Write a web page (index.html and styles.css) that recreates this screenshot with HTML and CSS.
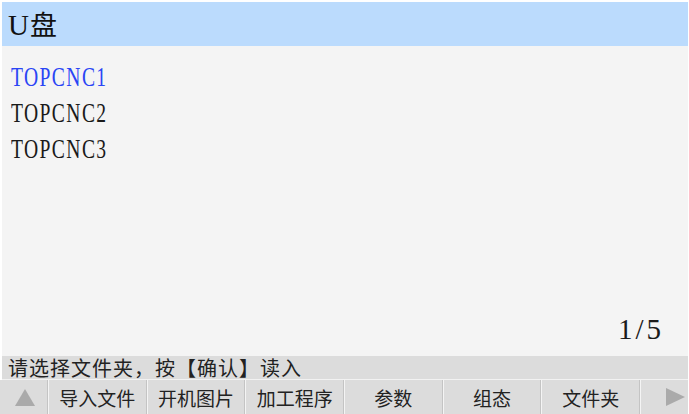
FILE: index.html
```html
<!DOCTYPE html>
<html lang="zh">
<head>
<meta charset="utf-8">
<title>U盘</title>
<link rel="stylesheet" href="styles.css">
</head>
<body>
<div class="screen">
  <header class="title">U<span class="cjk">盘</span></header>
  <main class="list">
    <div class="item active"><span class="narrow">TOPCNC1</span></div>
    <div class="item"><span class="narrow">TOPCNC2</span></div>
    <div class="item"><span class="narrow">TOPCNC3</span></div>
    <div class="pager">1/5</div>
  </main>
  <div class="status">请选择文件夹，按【确认】读入</div>
  <nav class="keys">
    <div class="key arrow"><span class="tri-up"></span></div>
    <div class="key">导入文件</div>
    <div class="key">开机图片</div>
    <div class="key">加工程序</div>
    <div class="key">参数</div>
    <div class="key">组态</div>
    <div class="key">文件夹</div>
    <div class="key arrow"><span class="tri-right"></span></div>
  </nav>
</div>
</body>
</html>
```
FILE: styles.css
```css
html, body {
  margin: 0;
  padding: 0;
  background: #ffffff;
}
body {
  width: 689px;
  height: 414px;
  overflow: hidden;
}
.screen {
  display: flex;
  flex-direction: column;
  height: 412px;
  padding: 2px 1px 0 2px;
}
.title {
  flex: none;
  height: 44px;
  background: #bbdbfd;
  font-family: "Liberation Serif", "Noto Sans CJK SC", serif;
  font-size: 29px;
  color: #111;
  line-height: 44px;
  padding-left: 6px;
}
.title .cjk {
  font-family: "Noto Sans CJK SC", sans-serif;
  font-size: 27px;
  margin-left: 1px;
}
.list {
  flex: none;
  height: 310px;
  background: #f4f4f4;
  position: relative;
  padding-top: 13px;
  box-sizing: border-box;
  font-family: "Liberation Serif", serif;
}
.item {
  height: 36px;
  line-height: 36px;
  font-size: 28px;
  color: #1a1a1a;
  padding-left: 9px;
}
.item.active {
  color: #2a45f5;
}
.narrow {
  display: inline-block;
  letter-spacing: 2px;
  transform: scaleX(0.7);
  transform-origin: left center;
}
.pager {
  position: absolute;
  right: 24px;
  bottom: 10px;
  font-size: 29px;
  letter-spacing: 3px;
  color: #1a1a1a;
}
.status {
  flex: none;
  height: 23px;
  line-height: 24px;
  background: #dcdcdc;
  font-family: "Noto Sans CJK SC", sans-serif;
  font-size: 20px;
  letter-spacing: 1px;
  color: #222;
  padding-left: 6px;
  border-bottom: 1px solid #f2f2f2;
  white-space: nowrap;
}
.keys {
  flex: none;
  height: 34px;
  display: grid;
  grid-template-columns: 48px repeat(6, 1fr) 48px;
  background: #c9c9c9;
  margin-left: -2px;
}
.key {
  background: #dcdcdc;
  border-left: 1px solid #f4f4f4;
  border-right: 1px solid #c4c4c4;
  display: flex;
  align-items: center;
  justify-content: center;
  font-family: "Noto Sans CJK SC", sans-serif;
  font-size: 19px;
  color: #222;
}
.key:first-child {
  border-left: none;
}
.key:last-child {
  border-right: none;
}
.tri-up {
  width: 0;
  height: 0;
  border-left: 10px solid transparent;
  border-right: 10px solid transparent;
  border-bottom: 17px solid #aaaaaa;
  margin-left: 2px;
}
.tri-right {
  width: 0;
  height: 0;
  border-top: 9px solid transparent;
  border-bottom: 9px solid transparent;
  border-left: 19px solid #aaaaaa;
  margin-left: 22px;
}
```
